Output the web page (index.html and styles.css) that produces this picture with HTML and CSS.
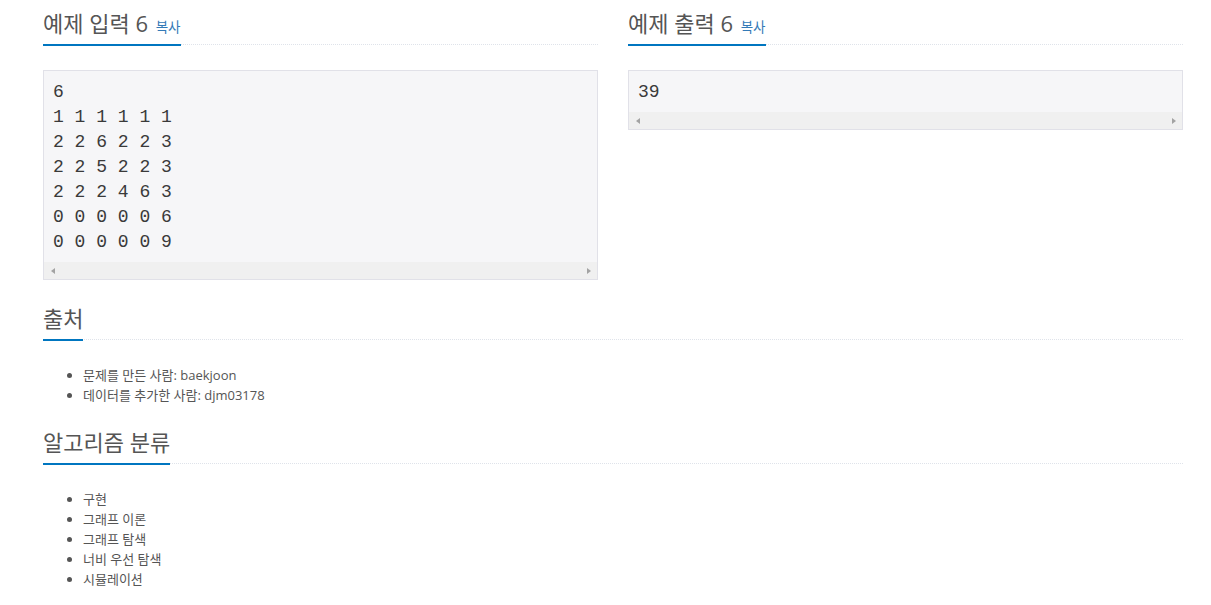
FILE: index.html
```html
<!DOCTYPE html>
<html lang="ko">
<head>
<meta charset="utf-8">
<title>예제</title>
<link rel="stylesheet" href="styles.css">
</head>
<body>
<div class="page">
  <div class="row">
    <section class="col">
      <div class="headline"><h2>예제 입력 6 <button type="button" class="copy">복사</button></h2></div>
      <div class="sample">
<pre>6
1 1 1 1 1 1
2 2 6 2 2 3
2 2 5 2 2 3
2 2 2 4 6 3
0 0 0 0 0 6
0 0 0 0 0 9</pre>
        <div class="hscroll"><span class="btn"><span class="tri left"></span></span><span class="btn"><span class="tri right"></span></span></div>
      </div>
    </section>
    <section class="col">
      <div class="headline"><h2>예제 출력 6 <button type="button" class="copy">복사</button></h2></div>
      <div class="sample">
<pre>39</pre>
        <div class="hscroll"><span class="btn"><span class="tri left"></span></span><span class="btn"><span class="tri right"></span></span></div>
      </div>
    </section>
  </div>
  <section class="block">
    <div class="headline"><h2>출처</h2></div>
    <ul class="list">
      <li>문제를 만든 사람: baekjoon</li>
      <li>데이터를 추가한 사람: djm03178</li>
    </ul>
  </section>
  <section class="block">
    <div class="headline"><h2>알고리즘 분류</h2></div>
    <ul class="list">
      <li>구현</li>
      <li>그래프 이론</li>
      <li>그래프 탐색</li>
      <li>너비 우선 탐색</li>
      <li>시뮬레이션</li>
    </ul>
  </section>
</div>
</body>
</html>
```
FILE: styles.css
```css
html, body {
  margin: 0;
  background: #fff;
}
body {
  font-family: "Open Sans", "Noto Sans CJK KR", sans-serif;
  color: #555;
}
.page {
  width: 1140px;
  margin-left: 43px;
  padding-top: 8px;
}
.row {
  display: flex;
  gap: 30px;
  margin-bottom: 23px;
}
.col {
  width: 555px;
}
.headline {
  border-bottom: 1px dotted #dfe3ea;
  margin-bottom: 25px;
}
.headline h2 {
  display: inline-block;
  margin: 0 0 -2px 0;
  padding-bottom: 6px;
  border-bottom: 2px solid #0076c0;
  font-size: 22px;
  line-height: 30px;
  font-weight: 400;
  color: #555;
}
.copy {
  border: 0;
  padding: 0 0 0 2px;
  background: none;
  font-family: "Open Sans", "Noto Sans CJK KR", sans-serif;
  font-size: 13.5px;
  color: #337ab7;
  cursor: pointer;
}
.sample {
  border: 1px solid #e1e1e8;
  background: #f6f6f8;
}
.sample pre {
  margin: 0;
  padding: 9px 9px 7px;
  font-family: "Liberation Mono", monospace;
  font-size: 18px;
  line-height: 25px;
  color: #3a3a3a;
}
.hscroll {
  height: 17px;
  background: #f0f0f0;
  display: flex;
  justify-content: space-between;
}
.btn {
  width: 17px;
  height: 17px;
  display: flex;
  align-items: center;
  justify-content: center;
}
.tri {
  width: 0;
  height: 0;
  border-top: 3.5px solid transparent;
  border-bottom: 3.5px solid transparent;
}
.tri.left {
  border-right: 4px solid #a3a3a3;
}
.tri.right {
  border-left: 4px solid #a3a3a3;
}
.block {
  margin-bottom: 22px;
}
.list {
  margin: 0;
  padding-left: 40px;
  font-size: 13px;
  line-height: 20px;
  color: #555;
}
```
